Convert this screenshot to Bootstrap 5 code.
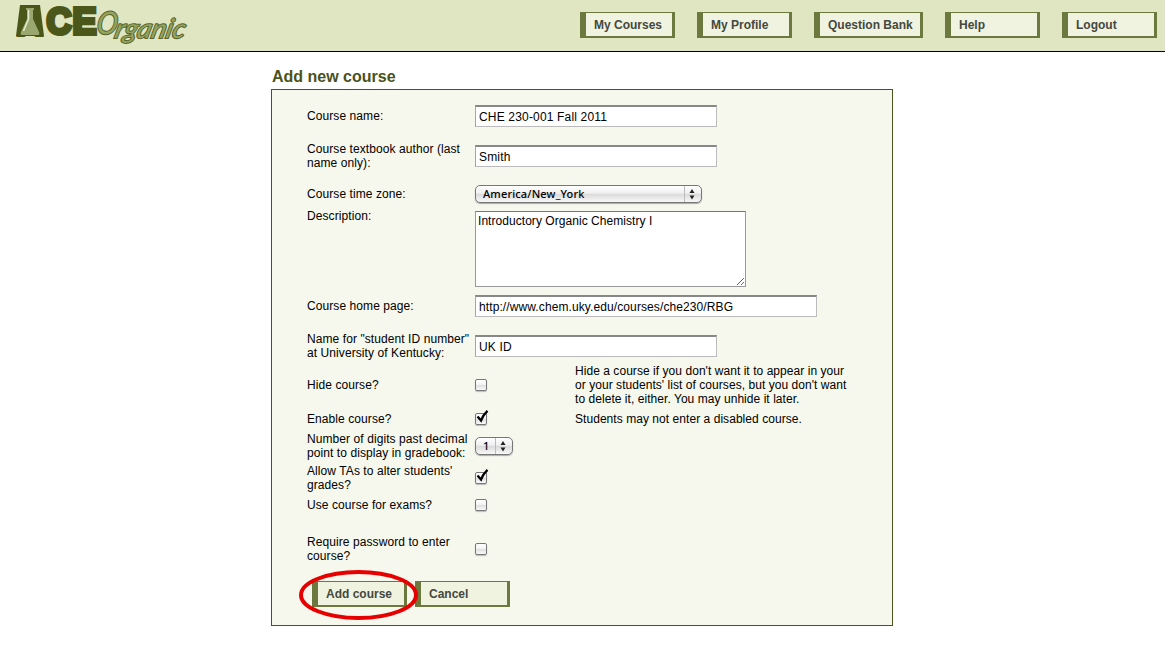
<!DOCTYPE html>
<html lang="en">
<head>
<meta charset="utf-8">
<title>ACE Organic - Add new course</title>
<meta name="viewport" content="width=device-width, initial-scale=1">
<link href="https://cdn.jsdelivr.net/npm/bootstrap@5.3.0/dist/css/bootstrap.min.css" rel="stylesheet">
<style>
body { font: 12px/14px "Liberation Sans", Arial, sans-serif; color: #000; background: #fff; overflow: hidden; }
.topbar { height: 52px; background: #e0e6c2; border-bottom: 1px solid #000; padding: 0 8px 0 15px; }
.topbar svg { overflow: visible; }
.topbar-links { gap: 22px; padding-top: 12px; }
.ace-btn { width: 95px; height: 26px; padding: 1px 0 0 8px; border-style: solid; border-color: #6b783e; border-width: 1px 3px 2px 6px; border-radius: 0; background: #f0f3e0; color: #444840; font-size: 12px; font-weight: 700; line-height: 23px; text-align: left; white-space: nowrap; }
.ace-btn:hover { background: #e0e6c2; border-color: #6b783e; }
.ace-btn.wide { width: 109px; }
.page { width: 622px; margin-left: 271px; padding-top: 16px; }
.page h1 { font-size: 16px; line-height: 18px; font-weight: 700; color: #4a521c; margin: 0 0 3px 1px; }
.panel { height: 537px; border: 1px solid #4a551d; background: #f6f7ed; padding: 6px 35px 0; }
.fields { display: grid; grid-template-columns: 168px 100px 1fr; grid-template-rows: 40px 40px 33px 80px 34px 41px 42px 26px 28px 36px 18px 64px; align-items: center; }
.fields > label { grid-column: 1; white-space: nowrap; letter-spacing: .08px; }
.fields > .ctl { grid-column: 2 / 4; }
.fields > .tick { grid-column: 2; }
.hint { grid-column: 3; white-space: nowrap; letter-spacing: .05px; }
.fields .form-control { width: 242px; height: 22px; min-height: 0; padding: 1px 3px 1px; border: 1px solid #bbb; border-top: 2px solid #888; border-left-color: #a5a5a5; border-radius: 0; font-size: 12px; line-height: 17px; color: #000; background: #fff; letter-spacing: .17px; }
.fields .form-control.long { width: 342px; letter-spacing: .1px; }
.fields textarea.form-control { width: 271px; height: 76px; margin-top: 2px; padding: 2px 2px; border: 1px solid #999; border-top-color: #777; line-height: 14px; letter-spacing: .05px; }
.fields .form-select { height: 18px; width: 227px; padding: 0 24px 1px 7px; border: 1px solid #777; border-radius: 5px; font: 500 11px/14px "Noto Sans", "DejaVu Sans", sans-serif; color: #000; letter-spacing: .15px;
  background: url("data:image/svg+xml,%3Csvg xmlns='http://www.w3.org/2000/svg' width='18' height='16'%3E%3Cpath d='M1.5 0v16' stroke='%23bbb'/%3E%3Cpath d='M6.500 7l2.5-4L11.500 7zM6.500 9.500l2.500 4L11.500 9.500z' fill='%23222'/%3E%3C/svg%3E") right 0 center / 18px 16px no-repeat, linear-gradient(#fff 0, #efefef 46%, #dadada 50%, #f8f8f8 100%); box-shadow: 0 1px 1px #aaa; }
.fields .form-select.small-num { width: 38px; padding: 0 0 0 7px; }
.tick .form-check-input { display: block; width: 12px; height: 12px; margin: 0; border: 1px solid #777; border-radius: 2px; background: linear-gradient(#fff 0, #f3f3f3 48%, #dfdfdf 52%, #fafafa); box-shadow: 0 1px 1px #bbb; }
.tick { position: relative; }
.tick svg { position: absolute; left: 0; bottom: 0; pointer-events: none; }
.low3 { padding-top: 3px; }
.low5 { padding-top: 5px; }
.low6 { padding-top: 6px; }
.actions { gap: 8px; margin: 3px 0 0 5px; }
.ring { position: absolute; left: -13px; top: -12px; pointer-events: none; }
</style>
</head>
<body>
<header class="topbar d-flex justify-content-between align-items-start">
  <a href="#" aria-label="ACE Organic">
    <svg class="d-block" width="175" height="50" viewBox="15 0 175 50">
      <g font-family="Liberation Sans, sans-serif" font-weight="700" font-size="37" fill="#4b571a" stroke="#4b571a" stroke-width="4">
        <text x="18" y="34.500" font-size="36" textLength="24" lengthAdjust="spacingAndGlyphs">A</text>
        <text x="46.500" y="34" textLength="25" lengthAdjust="spacingAndGlyphs">C</text>
        <text x="72.500" y="34" textLength="24" lengthAdjust="spacingAndGlyphs">E</text>
      </g>
      <path d="M20 5h20l4 31H16z" fill="#4b571a"/>
      <path d="M26 8h8v2h-1v9l6 13q1 3-1 3H22q-2 0-1-3l6-13v-9h-1z" fill="#9aa86f"/>
      <path d="M28.500 10v9l-5 12" stroke="#e5ead0" stroke-width="1.500" fill="none"/>
      <g font-family="Lato, sans-serif" font-style="italic" fill="#93a35d" stroke="#56622a" stroke-width="2" paint-order="stroke">
        <text transform="translate(96 34) skewX(-6)" font-size="31" textLength="21" lengthAdjust="spacingAndGlyphs">O</text>
        <text transform="translate(113.500 38) skewX(-14)" font-size="27" textLength="70" lengthAdjust="spacingAndGlyphs">rganic</text>
      </g>
    </svg>
  </a>
  <nav class="topbar-links d-flex">
    <a class="btn ace-btn" href="#">My Courses</a>
    <a class="btn ace-btn" href="#">My Profile</a>
    <a class="btn ace-btn wide" href="#">Question Bank</a>
    <a class="btn ace-btn" href="#">Help</a>
    <a class="btn ace-btn" href="#">Logout</a>
  </nav>
</header>
<main class="page">
  <h1>Add new course</h1>
  <form class="panel">
    <div class="fields">
      <label for="name">Course name:</label>
      <div class="ctl"><input id="name" class="form-control" value="CHE 230-001 Fall 2011"></div>
      <label for="author">Course textbook author (last<br>name only):</label>
      <div class="ctl"><input id="author" class="form-control" value="Smith"></div>
      <label for="zone" class="low3">Course time zone:</label>
      <div class="ctl low3"><select id="zone" class="form-select"><option>America/New_York</option></select></div>
      <label for="desc" class="align-self-start">Description:</label>
      <div class="ctl align-self-start"><textarea id="desc" class="form-control">Introductory Organic Chemistry I</textarea></div>
      <label for="home">Course home page:</label>
      <div class="ctl"><input id="home" class="form-control long" value="http://www.chem.uky.edu/courses/che230/RBG"></div>
      <label for="sid" class="low5">Name for "student ID number"<br>at University of Kentucky:</label>
      <div class="ctl low5"><input id="sid" class="form-control" value="UK ID"></div>
      <label for="hide">Hide course?</label>
      <div class="tick"><input id="hide" type="checkbox" class="form-check-input"></div>
      <div class="hint">Hide a course if you don't want it to appear in your<br>or your students' list of courses, but you don't want<br>to delete it, either. You may unhide it later.</div>
      <label for="enable">Enable course?</label>
      <div class="tick"><input id="enable" type="checkbox" class="form-check-input"><svg width="14" height="16"><path d="M2.500 7.500l3.500 4Q8 6 12.500 1.800" fill="none" stroke="#000" stroke-width="2.300"/></svg></div>
      <div class="hint">Students may not enter a disabled course.</div>
      <label for="digits">Number of digits past decimal<br>point to display in gradebook:</label>
      <div class="ctl"><select id="digits" class="form-select small-num"><option>1</option></select></div>
      <label for="tas">Allow TAs to alter students'<br>grades?</label>
      <div class="tick"><input id="tas" type="checkbox" class="form-check-input"><svg width="14" height="16"><path d="M2.500 7.500l3.500 4Q8 6 12.500 1.800" fill="none" stroke="#000" stroke-width="2.300"/></svg></div>
      <label for="exams">Use course for exams?</label>
      <div class="tick"><input id="exams" type="checkbox" class="form-check-input"></div>
      <label for="pass" class="low6">Require password to enter<br>course?</label>
      <div class="tick low6"><input id="pass" type="checkbox" class="form-check-input"></div>
    </div>
    <div class="actions d-flex position-relative">
      <button type="button" class="btn ace-btn">Add course</button>
      <button type="button" class="btn ace-btn">Cancel</button>
      <svg class="ring" width="120" height="52"><ellipse cx="59.500" cy="26" rx="57.500" ry="23" fill="none" stroke="#e60000" stroke-width="4"/></svg>
    </div>
  </form>
</main>
<script src="https://cdn.jsdelivr.net/npm/bootstrap@5.3.0/dist/js/bootstrap.bundle.min.js"></script>
</body>
</html>
